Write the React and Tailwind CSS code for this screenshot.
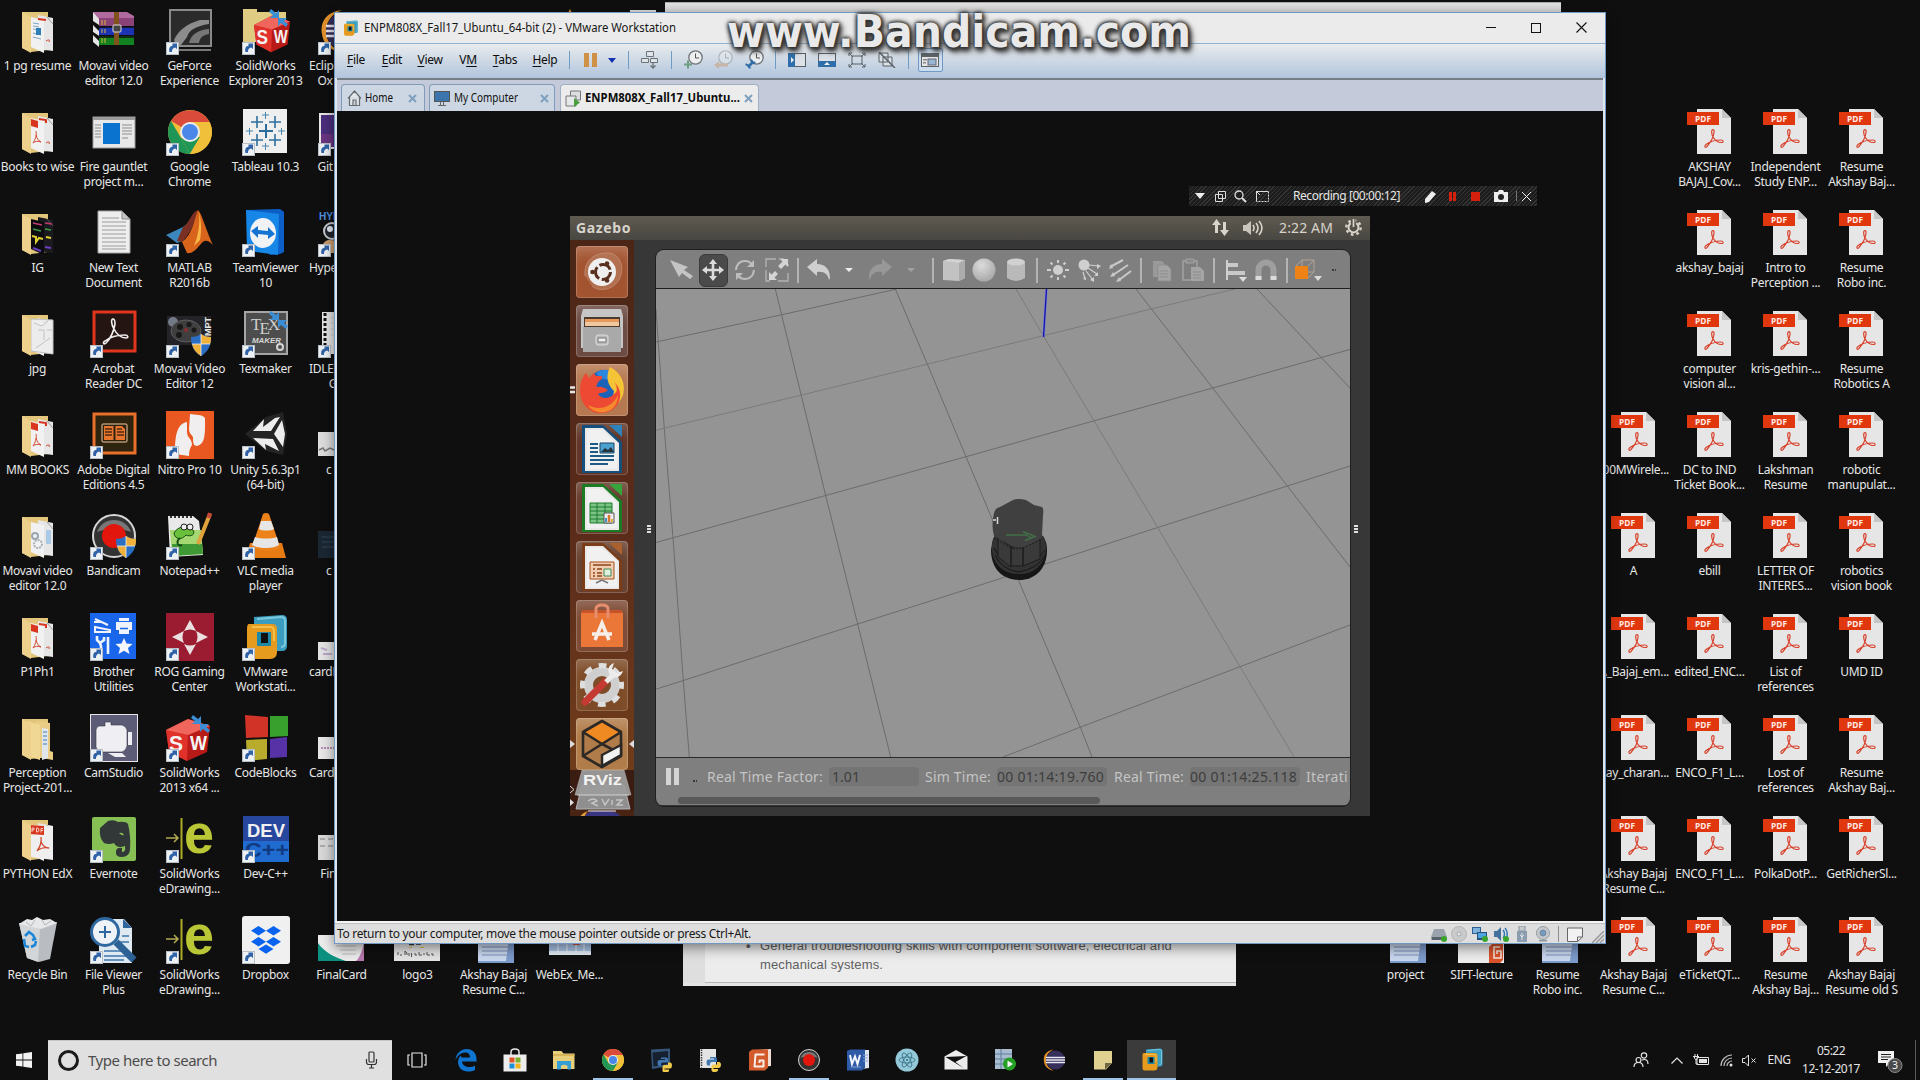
import React, { useLayoutEffect, useRef, useState } from "react";

/* Text set to a given width by adjusting its tracking (or its horizontal scale). */
function Fit({ w, children, className = "", stretch = false }) {
  const ref = useRef(null);
  const [style, setStyle] = useState({});
  useLayoutEffect(() => {
    const el = ref.current;
    const natural = el.getBoundingClientRect().width;
    if (stretch) {
      setStyle({ transform: `scaleX(${w / natural})`, width: w });
    } else {
      setStyle({ letterSpacing: `${(w - natural) / String(children).length}px` });
    }
  }, [w, children, stretch]);
  return (
    <span ref={ref} style={style} className={"inline-block shrink-0 origin-left self-center whitespace-pre " + className}>
      {children}
    </span>
  );
}

const S = ({ children, w = 48, h = 48, vb, className = "" }) => (
  <svg width={w} height={h} viewBox={vb || `0 0 ${w} ${h}`} className={"block shrink-0 " + className} fill="none">
    {children}
  </svg>
);

/* ---------- desktop icon drawings (48 x 48) ---------- */
const Arrow = () => (
  <g>
    <rect x="0.5" y="35.5" width="12" height="12" fill="#eef1f4" stroke="#b9bfc6" />
    <path d="M3.500 45c-1-4 .5-6 3-6.300V36.500h4.500v5.500L9.200 40.500C7 41 5.800 42.500 6 45z" fill="#2f62a6" />
  </g>
);

const Folder = ({ kind }) => (
  <S>
    <path d="M8 5h26v38l-17 2L8 41z" fill="#e3c57c" />
    {kind === "open" ? (
      <g>
        <path d="M22 7l14 2v28l3 1v8l-17-3z" fill="#e9cd86" />
        <path d="M28 14l6 1v29l-6 2z" fill="#dfe6ec" />
        <path d="M29 18h4M29 22h4M29 26h4M29 30h4" stroke="#3b78b5" />
        <path d="M13 7l13 4v35l-9-3z" fill="#f0d793" />
      </g>
    ) : (
      <g>
        <path d="M24 8l15 3v33l-15-2z" fill={kind === "dark" ? "#1b1b1f" : "#e6e6e6"} />
        <path d="M33 10l6 7" stroke={kind === "dark" ? "#555" : "#9a9a9a"} />
        <path d="M17 10l13 3v33l-13-6z" fill={kind === "dark" ? "#0c0c10" : "#f1f1f1"} />
        {kind === "pdf" && (
          <g>
            <path d="M17 11l7 2v7l-7-2z" fill="#d8361f" />
            <path d="M25 11l7 1v3" stroke="#d8361f" strokeWidth="2" />
            <path d="M22 23c1 4-1 9-3 12M22 27c1 4 3 6 5 7-3-1-6-1-8 1M32 35c3-2 4-1 3 1" stroke="#d0482f" />
          </g>
        )}
        {kind === "big" && (
          <g>
            <path d="M17 10l22 1v34l-22-3z" fill="#efefef" />
            <path d="M15 10l15 1v9l-15-1z" fill="#d8361f" />
            <path d="M18 13v4M18 13h2v2h-2M22.500 13v4h1.500l1-2-1-2zM27 17.500v-4h2M27 15.500h2" stroke="#f6ddd6" strokeWidth=".9" />
            <path d="M27 22c1 6-1 10-4 14M27 27c2 4 5 6 8 6-4-1-8 0-11 2" stroke="#d0482f" strokeWidth="1.300" />
          </g>
        )}
        {kind === "doc" && (
          <g>
            <path d="M19 16l6 1M19 19l6 1M19 22l6 1M19 26l8 2M19 30l8 2" stroke="#7da3c4" />
            <path d="M22 21h5v7h-5z" fill="#2e7fb8" />
            <path d="M24 12l8 1" stroke="#d8361f" strokeWidth="2" />
            <path d="M32 34c3-2 4-1 3 1" stroke="#d0482f" />
          </g>
        )}
        {kind === "gear" && (
          <g>
            <circle cx="21" cy="24" r="3" stroke="#9aa7b0" strokeWidth="2" />
            <circle cx="24" cy="32" r="4" stroke="#a7b1b8" strokeWidth="2" strokeDasharray="2 1" />
            <path d="M32 18h5v14h-5z" fill="#a9c9e6" />
          </g>
        )}
        {kind === "sketch" && <path d="M17 9l22 1v34l-22-3zM20 13l8 3 6-5M24 20h6v10M33 20h5M22 38l14-10" fill="#ececec" stroke="#c2c2c2" />}
        {kind === "dark" && (
          <g strokeWidth="1.500">
            <path d="M19 14l9 2M31 14l7 1" stroke="#c33a72" />
            <path d="M19 20l8 2M31 20l6 1" stroke="#3f9a46" />
            <path d="M18 27l4 1v5l3-4 4 1M32 28l5 1" stroke="#e0cf34" strokeWidth="2" />
            <path d="M19 39l8 3M31 38l6 1" stroke="#6c3fc0" strokeWidth="2" />
          </g>
        )}
      </g>
    )}
    <path d="M8 5l9 5v36l-9-5z" fill="#ecd08b" />
  </S>
);

const Pdf = () => (
  <S>
    <g transform="translate(0 -1)">
      <path d="M11 2h25l9 9v36H11z" fill="#e6e6e6" />
      <path d="M36 2l9 9h-9z" fill="#c6c6c6" />
      <rect x="1" y="5" width="32" height="13" fill="#e0370f" />
      <text x="17" y="15.200" textAnchor="middle" fontFamily="Noto Sans" fontWeight="700" fontSize="9.500" fill="#ffe9e2" textLength="16" lengthAdjust="spacingAndGlyphs">PDF</text>
      <path d="M27 22.500c-2 0-1.500 5 0 7.500 2 3.500 5 5.500 8.500 5.500 2.500 0 2-2.500-.5-2.500-5 0-11 1.500-15 4.500-2.500 2-.5 4 1 2 3.500-4 6.500-10 7-14 .2-2-.2-3-1-3z" stroke="#d8402a" strokeWidth="1.200" />
    </g>
  </S>
);

const Shield = ({ x = 26, y = 24 }) => (
  <g transform={`translate(${x} ${y})`}>
    <path d="M0 3c4 0 7-1 10-3 3 2 6 3 10 3 0 9-3 15-10 19C3 18 0 12 0 3z" fill="#2a6fc4" />
    <path d="M10 0c3 2 6 3 10 3 0 3 0 5-1 7h-9zM10 10v12C5 19 2 15 1 10z" fill="#f0b13b" />
    <path d="M10 0v22M1 10h18" stroke="#e8eef5" strokeWidth=".8" />
  </g>
);

const Chrome = () => (
  <g>
    <circle cx="24" cy="24" r="22" fill="#f1c03b" />
    <path d="M24 24L5 13A22 22 0 0 1 43.500 14H24z" fill="#da4b3b" />
    <path d="M5 13l10 17 9 16A22 22 0 0 1 5 13z" fill="#1f9556" />
    <path d="M15 30l9 16 10-17z" fill="#1f9556" />
    <path d="M24 46l10-17 3-15h6.500A22 22 0 0 1 24 46z" fill="#f1c03b" />
    <circle cx="24" cy="24" r="10" fill="#ececec" />
    <circle cx="24" cy="24" r="8" fill="#4b87e8" />
  </g>
);

const BandicamArt = () => (
  <g>
    <circle cx="24" cy="24" r="21" fill="#333" stroke="#d6d6d6" strokeWidth="2" />
    <path d="M7 20a18 18 0 0 1 34 0c-9-4-25-4-34 0z" fill="#777" />
    <circle cx="24" cy="24" r="12" fill="#e2160c" />
  </g>
);

const VmArt = () => (
  <g>
    <path d="M12 3l28-2q5 0 5 5v26q0 5-5 5H20q-8 0-8-8z" fill="#3b9dc0" />
    <path d="M15 5l24-2q4 0 4 4v22q0 4-4 4" stroke="#7cc8dd" strokeWidth="2" />
    <path d="M7 10h23q5 0 5 5v23q0 7-7 7H10q-5 0-5-5V15q0-5 2-5z" fill="#e69b1f" />
    <path d="M10 13h18q4 0 4 4v10" stroke="#f4c04d" strokeWidth="2" />
    <path d="M15 18h14v14H15z" fill="#1d88a8" />
    <path d="M19 19h7v10h-7z" fill="#101010" />
  </g>
);

const SwArt = () => (
  <g>
    <path d="M0 16L22 5l22 7-3 26-20 9L3 38z" fill="#b81a17" />
    <path d="M0 16l22 5-1 26L3 38z" fill="#e0312b" />
    <path d="M0 16L22 5l22 7-22 9z" fill="#f0665c" />
    <text x="3" y="37" fontFamily="Liberation Sans" fontWeight="700" fontSize="22" fill="#f4f4f4" textLength="14" lengthAdjust="spacingAndGlyphs">S</text>
    <text x="24" y="36" fontFamily="Liberation Sans" fontWeight="700" fontSize="20" fill="#f4f4f4" textLength="17" lengthAdjust="spacingAndGlyphs">W</text>
  </g>
);
const Compress = ({ x = 26, y = 2 }) => (
  <g transform={`translate(${x} ${y})`} fill="#3b8ed6">
    <path d="M2 0l5 4 3-3v8H1l3-3-4-3zM17 18l-5-4-3 3v-8h9l-3 3 4 3z" />
  </g>
);
const EDrawArt = () => (
  <g>
    <path d="M15.500 3v41" stroke="#a9ac24" strokeWidth="2" />
    <path d="M0 23h12M8 19l4 4-4 4" stroke="#b4ab52" strokeWidth="1.500" />
    <text x="18" y="38" fontFamily="Liberation Sans" fontWeight="700" fontSize="56" fill="#b9c635" textLength="30" lengthAdjust="spacingAndGlyphs">e</text>
  </g>
);
const EclipseArt = () => (
  <g>
    <path d="M24 3C8 5 2 15 4 27c1 9 8 17 19 18C12 40 8 32 8 24S13 7 24 3z" fill="#e2922d" />
    <circle cx="27" cy="24" r="19" fill="#352f5c" />
    <path d="M8 19h38M8 24h38M8 29h38" stroke="#e8e6f0" strokeWidth="2.600" />
  </g>
);
const Paper = ({ c = "#e6e6e6", children, h = 26, y = 12 }) => (
  <S>
    <rect x="0" y={y} width="46" height={h} fill={c} />
    {children}
  </S>
);
const WordDoc = () => (
  <S>
    <rect x="8" y="2" width="36" height="45" fill="#7c9acb" />
    <path d="M8 2h34l-6 43H8z" fill="#c9d7ee" />
    <path d="M12 12h26M12 17h26M12 22h26M12 27h26M12 31h26M12 35h26M12 39h26" stroke="#7d93b8" />
  </S>
);

const ART = {
  winrar: (
    <S>
      <path d="M3 5h34l7 4v9H9z" fill="#b06a9e" />
      <path d="M3 5l6 7v6l-6-4zM3 18l6 6v5l-6-4zM3 28l6 6v6l-6-5z" fill="#e4e4e4" />
      <path d="M9 11h35v8H9z" fill="#8a4277" />
      <path d="M9 20h35v8H9z" fill="#1c34b4" />
      <path d="M9 29h35v9H9z" fill="#128221" />
      <path d="M3 16l6 4h35M3 26l6 4h35" stroke="#111" strokeWidth="1.500" />
      <path d="M12 13v5M12 22v4M12 31v5M15 13v5M15 22v4M15 31v5" stroke="#d9b33a" />
      <path d="M24 5h5v33h-5z" fill="#80531c" />
      <rect x="23" y="18" width="8" height="7" rx="1" stroke="#dedede" fill="#444" />
    </S>
  ),
  geforce: (
    <S>
      <rect x="4" y="3" width="41" height="36" fill="#2b2b2b" stroke="#8a8a8a" strokeWidth="2" />
      <path d="M8 33c4-9 12-16 26-20h9v4C30 19 23 23 21 30l-6 8h-5z" fill="#8c8c8c" />
      <path d="M23 36c2-8 8-13 20-14v5c-7 1-9 4-10 9z" fill="#777" />
      <path d="M13 43h32" stroke="#777" strokeWidth="2" />
      <Arrow />
    </S>
  ),
  swfolder: (
    <S>
      <path d="M1 2h14v3h29v30H1z" fill="#e0cb83" />
      <g transform="translate(12 4) scale(.82 .88)"><SwArt /></g>
      <Compress x={27} y={2} />
      <Arrow />
    </S>
  ),
  eclipse: <S><EclipseArt /><Arrow /></S>,
  tile: (
    <S>
      <rect x="3" y="9" width="42" height="31" fill="#e8e8e8" stroke="#9b9b9b" />
      <path d="M3 9h42v3H3z" fill="#9c9c9c" />
      <rect x="13" y="15" width="17" height="21" fill="#0a72cf" />
      <path d="M5 17h6M5 20h6M5 23h6M5 26h6M5 29h6M32 17h10M32 20h10M32 23h10M32 26h10M32 30h6" stroke="#8d8d8d" />
    </S>
  ),
  chrome: <S><Chrome /><Arrow /></S>,
  tableau: (
    <S>
      <rect x="1" y="1" width="44" height="44" fill="#efefef" />
      <path d="M17 23h14M24 16v14" stroke="#2c6c9c" strokeWidth="2" />
      <path d="M9 14h12M15 8v12M27 14h12M33 8v12M9 32h12M15 26v12M27 32h12M33 26v12" stroke="#2f6f9e" strokeWidth="1.600" />
      <path d="M20 7h7M23.500 4v7M20 38h7M23.500 35v7M4 23h7M7.500 20v7M36 23h7M39.500 20v7" stroke="#4a86ac" />
      <Arrow />
    </S>
  ),
  github: <S><rect x="2" y="6" width="44" height="34" fill="#4a2e7c" stroke="#e5e5e5" strokeWidth="2" /><path d="M3 26h12v13H3z" fill="#6b3582" /><Arrow /></S>,
  text: (
    <S>
      <path d="M8 2h24l8 8v34H8z" fill="#ededed" stroke="#a5a5a5" />
      <path d="M32 2l8 8h-8z" fill="#c4c4c4" stroke="#8b8b8b" />
      <path d="M12 9h17M12 13h24M12 17h24M12 21h24M12 25h24M12 29h24M12 33h24M12 37h24M12 40h24" stroke="#9b9b9b" />
    </S>
  ),
  matlab: (
    <S>
      <path d="M0 26l17-8 8-6-8 20-6 2z" fill="#3b86bd" />
      <path d="M17 18c6-3 9-16 15-17-4 12-6 22-16 32l-5-1z" fill="#7a2f22" />
      <path d="M32 1c4 4 8 20 15 35-6-6-9-5-13 0-5 6-9 9-13 8l-5-11C27 25 28 10 32 1z" fill="#d8641c" />
      <path d="M33 3c1 10 0 22-5 34l6-6c2-10 1-20-1-28z" fill="#f6b545" />
      <Arrow />
    </S>
  ),
  teamviewer: (
    <S>
      <path d="M4 1l34-1 4 3v40l-4 2-10 1z" fill="#0c5fc7" />
      <path d="M4 1l33 4-1 41-29-4H5z" fill="#1687e6" />
      <ellipse cx="21" cy="24" rx="13" ry="15" fill="#f0f2f5" />
      <path d="M9 22l7-5v4l10 1v-4l7 7-7 5v-4l-10-1v4z" fill="#1574d2" />
      <Arrow />
    </S>
  ),
  hyper: (
    <S>
      <text x="1" y="11" fontFamily="Liberation Sans" fontWeight="700" fontSize="10" fill="#4e8ee0">HYPER</text>
      <circle cx="14" cy="22" r="8" fill="#20242c" stroke="#c6c9cf" strokeWidth="2" />
      <circle cx="12" cy="20" r="3" fill="#dfe6ef" />
      <path d="M4 38c2-8 8-8 14-6v12H4z" fill="#c99e70" />
      <Arrow />
    </S>
  ),
  acrobat: (
    <S>
      <rect x="4" y="2" width="41" height="39" fill="#251512" stroke="#e1361d" strokeWidth="3" />
      <path d="M23 9c-2 0-2 5 1 10 3 6 8 9 12 9 3 0 2-3-1-3-7 0-15 2-20 6-3 2-1 4 1 2 5-5 8-13 9-19 0-3-1-5-2-5z" stroke="#f0eeee" strokeWidth="1.600" />
      <Arrow />
    </S>
  ),
  mpt: (
    <S>
      <rect x="1" y="6" width="44" height="29" fill="#242428" />
      <circle cx="7" cy="12" r="5" fill="#a9b4c6" opacity=".6" />
      <ellipse cx="20" cy="21" rx="15" ry="11" fill="#3f3f3f" stroke="#5d5d5d" />
      <circle cx="14" cy="17" r="3" fill="#191919" /><circle cx="23" cy="14.500" r="2.600" fill="#191919" /><circle cx="28" cy="20" r="2.600" fill="#191919" /><circle cx="13" cy="25" r="3" fill="#191919" /><circle cx="20" cy="20" r="2" fill="#8a2c2c" />
      <text transform="translate(45 26) rotate(-90)" fontFamily="Liberation Sans" fontWeight="700" fontSize="9" fill="#e6e6e6">MPT</text>
      <Shield x={25} y={24} />
      <Arrow />
    </S>
  ),
  texmaker: (
    <S>
      <rect x="3" y="2" width="42" height="42" fill="#4d4d4d" stroke="#a5a5a5" strokeWidth="2" />
      <text x="9" y="20" fontFamily="Liberation Serif" fontSize="17" fill="#cfcfcf">T<tspan dx="-2" dy="4">E</tspan><tspan dx="-2" dy="-4">X</tspan></text>
      <text x="10" y="33" fontFamily="Liberation Sans" fontWeight="700" fontStyle="italic" fontSize="7.500" fill="#d8d8d8" textLength="29" lengthAdjust="spacingAndGlyphs">MAKER</text>
      <circle cx="38" cy="37" r="3" stroke="#d5d5d5" strokeWidth="2" />
      <Compress x={27} y={1} />
      <Arrow />
    </S>
  ),
  idle: (
    <S>
      <rect x="4" y="2" width="42" height="42" fill="#e4e4e4" />
      <path d="M7 3v40" stroke="#111" strokeWidth="3" strokeDasharray="3 2" />
      <path d="M12 8h20M12 13h20M12 19h20M12 25h20" stroke="#cfcfcf" />
      <Arrow />
    </S>
  ),
  digital: (
    <S>
      <rect x="4" y="3" width="41" height="39" fill="#2e230f" stroke="#e8702a" strokeWidth="3" />
      <rect x="12" y="13" width="25" height="18" rx="1" stroke="#f0cba6" />
      <path d="M14 15h9.500v14H14zM25.500 15H32l3 3v11h-9.500z" fill="#e8752e" />
      <path d="M15 18h7M15 21h7M15 24h7M27 18h5M27 21h7M27 24h7" stroke="#4a2a10" strokeWidth="1.300" />
      <Arrow />
    </S>
  ),
  nitro: (
    <S>
      <rect width="48" height="48" fill="#ea5822" />
      <path d="M9 43c0-16 1-30 12-32v10c0 6 5 6 5 13-2 3-3 6-3 11z" fill="#f0eeee" />
      <path d="M24 3c5 1 12 0 15 4 0 14 1 26-8 28-4 0-4-4-4-9-2-3-4-4-4-8z" fill="#f0eeee" />
      <Arrow />
    </S>
  ),
  unity: (
    <S>
      <path d="M3 23L24 6l17-5 4 22-4 21-17-4z" fill="#242424" />
      <path d="M11 20L22 8l-1 8 12-9 5-1-9 14zM11 27l20 1 6 12-14-7 1 6zM32 23l8-14 3 14-2 13z" fill="#ededed" />
      <Arrow />
    </S>
  ),
  bandicam: <S><BandicamArt /><Shield x={26} y={24} /><Arrow /></S>,
  npp: (
    <S>
      <path d="M2 4h25l6 5 4 34-33 2z" fill="#e9e9e9" />
      <path d="M4 18h31l2 24-31 2z" fill="#a5d873" />
      <path d="M6 32h30l1 10-31 2z" fill="#3f9a35" />
      <path d="M4 5h24" stroke="#333" strokeWidth="2" strokeDasharray="2 2" />
      <path d="M8 21c4-7 12-8 19-3 3 5-3 7-7 5-4 5-11 5-12-2z" fill="#6abf3b" stroke="#174d16" />
      <circle cx="18" cy="15" r="3" fill="#eee" stroke="#222" /><circle cx="24" cy="15" r="3" fill="#eee" stroke="#222" />
      <path d="M14 26c-4 3-3 9 2 7" stroke="#174d16" strokeWidth="2" />
      <path d="M44 2l-12 30" stroke="#e0a23a" strokeWidth="4" />
      <path d="M44 1l-1.500 5" stroke="#c4483a" strokeWidth="4" />
      <Arrow />
    </S>
  ),
  vlc: (
    <S>
      <path d="M8 31h32l4 15H4z" fill="#e67a13" />
      <path d="M21 2q3-2 6 0l11 33c-4 5-22 5-28 0z" fill="#ee821a" />
      <path d="M19 9h10l3 8c-3 2-12 2-15 0zM13 25c6 2 16 2 22 0l2 8c-5 4-20 4-27 0z" fill="#e6e6e6" />
      <Arrow />
    </S>
  ),
  brother: (
    <S>
      <rect width="46" height="46" fill="#1a66ea" />
      <path d="M5 14l15 3v2H5zM5 6l13 6M4 9h8" stroke="#eef3fb" strokeWidth="2" />
      <path d="M26 9h16v8H26zM29 5h10v3H29zM29 15h10v6H29z" fill="#eef3fb" />
      <path d="M30 15.500h8" stroke="#1a66ea" strokeWidth="1.500" />
      <path d="M7 23v4l3 3 4-3v-3M10 30l1 3v8M18 24v9M18 33v8" stroke="#eef3fb" strokeWidth="2.600" />
      <path d="M34 25l2.500 5.500 6 .5-4.500 4 1.500 6-5.500-3.200-5.500 3.200 1.500-6-4.500-4 6-.5z" fill="#f4f6fb" />
      <Arrow />
    </S>
  ),
  rog: (
    <S>
      <rect width="48" height="48" fill="#9b1c31" />
      <path d="M24 7l6 11q-6-3-12 0zM24 42l6-11q-6 3-12 0zM6 24l12-6q-3 6 0 12zM42 24l-12-6q3 6 0 12z" fill="#eadfe1" />
      <Arrow />
    </S>
  ),
  vmware: <S><g transform="translate(0 1)"><VmArt /></g><Arrow /></S>,
  camstudio: (
    <S>
      <rect x=".5" y=".5" width="47" height="47" fill="#5d5c76" stroke="#e5e5ea" />
      <path d="M9 12h6V8h6v3h11q4 1 5 5v16q-1 5-5 6H11q-4-1-5-5V16q0-3 3-4z" fill="#efeff3" stroke="#333344" strokeWidth=".6" />
      <path d="M38 18h4v13h-4zM18 39h14l4 4H25z" fill="#efeff3" />
      <Arrow />
    </S>
  ),
  sw: <S><SwArt /><Compress x={25} y={1} /><Arrow /></S>,
  codeblocks: (
    <S>
      <path d="M3 1l23 2v20L4 24z" fill="#d13327" />
      <path d="M28 2h18v20l-18 1z" fill="#38a02d" />
      <path d="M4 26l21-1v20l-20 2z" fill="#b9ab2b" />
      <path d="M28 25l17-2v20l-17 1z" fill="#5732a6" />
      <Arrow />
    </S>
  ),
  evernote: (
    <S>
      <rect x="2" y="2" width="44" height="44" rx="2" fill="#86bf54" />
      <path d="M10 13l8-7q6-2 10 1 8-1 10 2 3 12 2 26-1 7-8 7-7 0-6-6 1-4 6-3v4q4 0 3-6-8 3-11-3-5 2-10 0-5-5-4-15z" fill="#323838" />
      <path d="M29 18q4-1 5 2-2 1-5-2z" fill="#86bf54" />
      <Arrow />
    </S>
  ),
  edraw: <S className="overflow-visible"><EDrawArt /><Arrow /></S>,
  dev: (
    <S>
      <rect x="1" y="1" width="46" height="46" fill="#27479e" />
      <path d="M1 26h46v21H1z" fill="#1f6bd0" />
      <text x="5" y="22" fontFamily="Liberation Sans" fontWeight="700" fontSize="19" fill="#f0f0f0" textLength="38" lengthAdjust="spacingAndGlyphs">DEV</text>
      <text x="3" y="42" fontFamily="Liberation Sans" fontWeight="700" fontSize="20" fill="#123a80" textLength="44" lengthAdjust="spacingAndGlyphs">C++</text>
      <Arrow />
    </S>
  ),
  recycle: (
    <S>
      <path d="M5 7l38-1-7 37-11 3-12-4z" fill="#b9bdc1" />
      <path d="M5 7l21 5-2 34-11-4z" fill="#d3d6d9" />
      <path d="M5 8l8-5 5 1 5-3 6 3 7-1 7 4-16 6z" fill="#e6e7e8" />
      <path d="M12 6l5 4 4-6M28 4l3 5 6-4" stroke="#b4b7ba" />
      <path d="M11 20l4-4 4 3 2 4-3 1M10 23l1 7 4 1M17 31l4-2 1-4" stroke="#1e86d6" strokeWidth="2.600" />
    </S>
  ),
  viewer: (
    <S>
      <path d="M14 3h20l8 9v35H9V20z" fill="#dfe9f2" />
      <path d="M33 3l9 9h-9z" fill="#2e659b" />
      <path d="M14 35h22M14 40h24M14 44h20M32 20h7M30 26h9" stroke="#3c75ab" strokeWidth="1.500" />
      <path d="M26 26l18 18" stroke="#2c6296" strokeWidth="7" />
      <circle cx="15" cy="16" r="13.500" fill="#eef3f8" stroke="#2f689f" strokeWidth="3" />
      <path d="M9 16h12M15 10v12" stroke="#2f689f" strokeWidth="2" />
      <Arrow />
    </S>
  ),
  dropbox: (
    <S>
      <rect width="48" height="48" rx="3" fill="#f0f0f0" />
      <path d="M16.500 10l7.500 4.700-7.500 4.700L9 14.700zM31.500 10l7.500 4.700-7.500 4.700-7.500-4.700zM16.500 21l7.500 4.700-7.500 4.700L9 25.700zM31.500 21l7.500 4.700-7.500 4.700-7.500-4.700zM24 28.500l7.500 4.500-7.500 4.700-7.500-4.700z" fill="#0a63ee" />
      <Arrow />
    </S>
  ),
  pdf: <Pdf />,
  word: <WordDoc />,
  paperSig: <Paper c="#dcdcdc" y={21} h={24}><path d="M1 39l4-2 2 3 5-3 4 2 6-2 4 2 8-2 8 2" stroke="#777" strokeWidth="1.500" /></Paper>,
  paperDark: <Paper c="#1b2733" y={19} h={27}><path d="M4 25h12M4 30h12M4 35h12" stroke="#2f4658" /></Paper>,
  paperLight: <Paper c="#e2e2e2" y={29} h={18}><path d="M3 35l6 2M5 41h9" stroke="#b9a7c9" strokeWidth="2" /></Paper>,
  paperText: <Paper c="#e6e6e6" y={23} h={22}><path d="M3 34h40" stroke="#b58ab0" strokeWidth="2" strokeDasharray="2 1" /></Paper>,
  paperGrey: <Paper c="#d7d7d7" y={20} h={25}><path d="M2 24h5M10 24h5M2 31h5M10 31h5" stroke="#9c9c9c" strokeWidth="1.500" /></Paper>,
  finalcard: (
    <Paper c="#ececec" y={19} h={26}>
      <path d="M0 27c6 9 16 14 28 18H0z" fill="#0c9180" />
      <path d="M46 27c-2 8-4 14-8 18h8z" fill="#b879ae" />
      <path d="M18 30h20M22 34h16M24 38h14" stroke="#bfbfbf" />
    </Paper>
  ),
  logo3: (
    <Paper c="#e3e3e3" y={19} h={26}>
      <path d="M15 28.500h5M22 28h5" stroke="#333" strokeWidth="1.500" />
      <path d="M15 31.500h3M26 31.500h4" stroke="#d9c04a" />
      <path d="M4 39v-3M6 39h2M11 39v-4l2 2v2M15 37v3M17.500 37v4M21 37v2h2M25 36v3h3M30 37v2M33 36v3h3M38 37v2h2" stroke="#555" />
    </Paper>
  ),
  webex: <S><rect x="3" y="10" width="42" height="28" fill="#a9c4e6" /><path d="M3 35h42v4H3z" fill="#e3ebf5" /><path d="M12 18v18M21 18v18M30 18v18M38 18v18M3 27h42" stroke="#eef4fb" /><path d="M27 26h7v3h-7z" fill="#d4553b" /></S>,
  sift: (
    <Paper c="#ececec" y={4} h={43}>
      <path d="M31 31l3-3h11v16l-3 3H31z" fill="#d9532c" /><path d="M42 31h-6v11h7v-7h-4v3" stroke="#f6e2d8" strokeWidth="1.600" />
      <path d="M22 27h4" stroke="#333" />
    </Paper>
  ),
  star: <S><path d="M24 2l5 10H19z" fill="#e08a2a" /></S>,
  page: <S><path d="M8 3h26v40H8z" fill="#dcdcdc" /></S>,
};

/* col, row, art, lines, optional side of labels that run under the window */
const ICONS = [
  [0, 0, "f:doc", ["1 pg resume"]], [1, 0, "winrar", ["Movavi video", "editor 12.0"]], [2, 0, "geforce", ["GeForce", "Experience"]], [3, 0, "swfolder", ["SolidWorks", "Explorer 2013"]], [4, 0, "eclipse", ["Eclip", "   Ox"], "l"],
  [7, 0, "star", []], [8, 0, "page", []],
  [0, 1, "f:pdf", ["Books to wise"]], [1, 1, "tile", ["Fire gauntlet", "project m..."]], [2, 1, "chrome", ["Google", "Chrome"]], [3, 1, "tableau", ["Tableau 10.3"]], [4, 1, "github", ["   Git"], "l"],
  [0, 2, "f:dark", ["IG"]], [1, 2, "text", ["New Text", "Document"]], [2, 2, "matlab", ["MATLAB", "R2016b"]], [3, 2, "teamviewer", ["TeamViewer", "10"]], [4, 2, "hyper", ["Hype"], "l"],
  [0, 3, "f:sketch", ["jpg"]], [1, 3, "acrobat", ["Acrobat", "Reader DC"]], [2, 3, "mpt", ["Movavi Video", "Editor 12"]], [3, 3, "texmaker", ["Texmaker"]], [4, 3, "idle", ["IDLE (", "       G"], "l"],
  [0, 4, "f:pdf", ["MM BOOKS"]], [1, 4, "digital", ["Adobe Digital", "Editions 4.5"]], [2, 4, "nitro", ["Nitro Pro 10"]], [3, 4, "unity", ["Unity 5.6.3p1", "(64-bit)"]], [4, 4, "paperSig", ["      c"], "l"],
  [0, 5, "f:gear", ["Movavi video", "editor 12.0"]], [1, 5, "bandicam", ["Bandicam"]], [2, 5, "npp", ["Notepad++"]], [3, 5, "vlc", ["VLC media", "player"]], [4, 5, "paperDark", ["      c"], "l"],
  [0, 6, "f:pdf", ["P1Ph1"]], [1, 6, "brother", ["Brother", "Utilities"]], [2, 6, "rog", ["ROG Gaming", "Center"]], [3, 6, "vmware", ["VMware", "Workstati..."]], [4, 6, "paperLight", ["cardD"], "l"],
  [0, 7, "f:open", ["Perception", "Project-201..."]], [1, 7, "camstudio", ["CamStudio"]], [2, 7, "sw", ["SolidWorks", "2013 x64 ..."]], [3, 7, "codeblocks", ["CodeBlocks"]], [4, 7, "paperText", ["Card"], "l"],
  [0, 8, "f:big", ["PYTHON EdX"]], [1, 8, "evernote", ["Evernote"]], [2, 8, "edraw", ["SolidWorks", "eDrawing..."]], [3, 8, "dev", ["Dev-C++"]], [4, 8, "paperGrey", ["    Fin"], "l"],
  [0, 9, "recycle", ["Recycle Bin"]], [1, 9, "viewer", ["File Viewer", "Plus"]], [2, 9, "edraw", ["SolidWorks", "eDrawing..."]], [3, 9, "dropbox", ["Dropbox"]], [4, 9, "finalcard", ["FinalCard"]],
  [5, 9, "logo3", ["logo3"]], [6, 9, "word", ["Akshay Bajaj", "Resume C..."]], [7, 9, "webex", ["WebEx_Me..."]],
  [18, 9, "word", ["project"]], [19, 9, "sift", ["SIFT-lecture"]], [20, 9, "word", ["Resume", "Robo inc."]],
  [22, 1, "pdf", ["AKSHAY", "BAJAJ_Cov..."]], [23, 1, "pdf", ["Independent", "Study ENP..."]], [24, 1, "pdf", ["Resume", "Akshay Baj..."]],
  [22, 2, "pdf", ["akshay_bajaj"]], [23, 2, "pdf", ["Intro to", "Perception ..."]], [24, 2, "pdf", ["Resume", "Robo inc."]],
  [22, 3, "pdf", ["computer", "vision al..."]], [23, 3, "pdf", ["kris-gethin-..."]], [24, 3, "pdf", ["Resume", "Robotics A"]],
  [21, 4, "pdf", ["00MWirele..."], "r"], [22, 4, "pdf", ["DC to IND", "Ticket Book..."]], [23, 4, "pdf", ["Lakshman", "Resume"]], [24, 4, "pdf", ["robotic", "manupulat..."]],
  [21, 5, "pdf", ["A"]], [22, 5, "pdf", ["ebill"]], [23, 5, "pdf", ["LETTER OF", "INTERES..."]], [24, 5, "pdf", ["robotics", "vision book"]],
  [21, 6, "pdf", ["A_Bajaj_em..."], "r"], [22, 6, "pdf", ["edited_ENC..."]], [23, 6, "pdf", ["List of", "references"]], [24, 6, "pdf", ["UMD ID"]],
  [21, 7, "pdf", ["jay_charan..."], "r"], [22, 7, "pdf", ["ENCO_F1_L..."]], [23, 7, "pdf", ["Lost of", "references"]], [24, 7, "pdf", ["Resume", "Akshay Baj..."]],
  [21, 8, "pdf", ["Akshay Bajaj", "Resume C..."]], [22, 8, "pdf", ["ENCO_F1_L..."]], [23, 8, "pdf", ["PolkaDotP..."]], [24, 8, "pdf", ["GetRicherSl..."]],
  [21, 9, "pdf", ["Akshay Bajaj", "Resume C..."]], [22, 9, "pdf", ["eTicketQT..."]], [23, 9, "pdf", ["Resume", "Akshay Baj..."]], [24, 9, "pdf", ["Akshay Bajaj", "Resume old S"]],
];

function Desktop() {
  return (
    <div className="grid h-[1010px] w-[1900px] grid-cols-[repeat(25,76px)] grid-rows-[repeat(10,101px)]">
      {ICONS.map(([c, r, art, lines, side], i) => (
        <div key={i} style={{ gridColumn: c + 1, gridRow: r + 1 }} className="flex flex-col items-center pt-[7px]">
          {art.startsWith("f:") ? <Folder kind={art.slice(2)} /> : ART[art]}
          <div
            className={
              "mt-[3px] w-full whitespace-pre text-[12px] leading-[15px] tracking-[-0.29px] text-[#e6e6e6] " +
              (side === "l" ? "pl-[5px] text-left" : side === "r" ? "flex flex-col items-end pr-[3px]" : "flex flex-col items-center pr-[1px]")
            }
          >
            {lines.map((l, j) => <div key={j}>{l}</div>)}
          </div>
        </div>
      ))}
    </div>
  );
}

/* ---------- VMware window ---------- */
const Slot = ({ className = "", children }) => <div className={"flex h-full shrink-0 items-center justify-center " + className}>{children}</div>;
const VSep = () => <div className="h-[18px] w-px bg-[#6f9cc4]" />;

const Monitor = () => (
  <S w={16} h={16}><rect x=".5" y="1.500" width="15" height="10" fill="#3c74ae" stroke="#555" /><path d="M6.500 12v3M9.500 12v3M4 15.500h8" stroke="#666" /></S>
);

const SnapClock = ({ children, faded }) => (
  <S w={20} h={20} className={faded ? "opacity-35" : ""}>
    <circle cx="11.500" cy="7.500" r="6.700" fill="#eceef0" stroke="#6e7478" strokeWidth="1.300" />
    <path d="M11.500 3.500v4.500h3.500" stroke="#555" />
    {children}
  </S>
);

function MenuItem({ w, pre = "", u, post = "" }) {
  return (
    <Slot className={w}>
      <span className="text-[12px] leading-4 tracking-[-0.3px] text-[#0c0c0c]">
        {pre}<span className="underline underline-offset-2">{u}</span>{post}
      </span>
    </Slot>
  );
}

function VmToolbar() {
  return (
    <div className="flex h-[35px] shrink-0 items-center border-t border-[#8fb2cf] bg-gradient-to-b from-[#e9ecee] via-[#cdd8e4] to-[#b1c5de] pb-[2px] pl-[2px]">
      <MenuItem w="w-[38px]" u="F" post="ile" />
      <MenuItem w="w-[34px]" u="E" post="dit" />
      <MenuItem w="w-[42px]" u="V" post="iew" />
      <MenuItem w="w-[34px]" pre="V" u="M" />
      <MenuItem w="w-[40px]" u="T" post="abs" />
      <MenuItem w="w-[40px]" u="H" post="elp" />
      <Slot className="w-[9px]"><VSep /></Slot>
      <Slot className="w-[32px] gap-[3px]"><div className="h-[14px] w-[5px] bg-[#cf9145]" /><div className="h-[14px] w-[5px] bg-[#cf9145]" /></Slot>
      <Slot className="w-[11px]"><S w={8} h={5}><path d="M0 0h8L4 5z" fill="#1230b0" /></S></Slot>
      <Slot className="w-[23px]"><VSep /></Slot>
      <Slot className="w-[20px]">
        <S w={18} h={18}><path d="M5.500.5h7v5h-7zM.500 7.500h7v4h-7zM9.500 7.500h7v4h-7z" fill="#dfe4e9" stroke="#6c7378" /><path d="M12 12v5M9.500 14.500L12 17l2.500-2.500" stroke="#6c7378" strokeWidth="1.300" /></S>
      </Slot>
      <Slot className="w-[23px]"><VSep /></Slot>
      <Slot className="w-[22px]"><SnapClock><path d="M0 14.500h8M4 10.500v8" stroke="#6f9d7f" strokeWidth="2" /></SnapClock></Slot>
      <Slot className="w-[38px]"><SnapClock faded><path d="M0 15l5-4v2.500h9v3H5V19z" fill="#c9803c" /></SnapClock></Slot>
      <Slot className="w-[24px]"><SnapClock><path d="M3 17l5-5" stroke="#2f6ea8" strokeWidth="2.600" /><path d="M6 9.500q1 3 4.500 3.500M.500 14.500q3 0 4.500 4" stroke="#2f6ea8" strokeWidth="2" /></SnapClock></Slot>
      <Slot className="w-[17px]"><VSep /></Slot>
      <Slot className="w-[26px]"><S w={18} h={14}><rect x=".5" y=".5" width="17" height="13" fill="#dbe1e6" stroke="#586066" /><path d="M0 0h7v14H0z" fill="#2f6ea8" /><path d="M3 4l3 3-3 3z" fill="#eee" /></S></Slot>
      <Slot className="w-[34px]"><S w={18} h={14}><rect x=".5" y=".5" width="17" height="13" fill="#dbe1e6" stroke="#586066" /><path d="M0 8h18v6H0z" fill="#2f6ea8" /><path d="M6 12l3-3 3 3z" fill="#eee" /></S></Slot>
      <Slot className="w-[26px]"><S w={18} h={16}><rect x="4" y="4" width="10" height="8" stroke="#586066" /><path d="M1 1l4 4M17 1l-4 4M1 15l4-4M17 15l-4-4M1 4V1h3M14 1h3v3M1 12v3h3M14 15h3v-3" stroke="#586066" /></S></Slot>
      <Slot className="w-[34px]"><S w={18} h={16}><path d="M1 1h9v9H1zM5 5h9v9H5z" fill="#dbe1e6" stroke="#586066" /><path d="M1 0l16 16" stroke="#586066" strokeWidth="1.500" /></S></Slot>
      <Slot className="w-[9px]"><VSep /></Slot>
      <Slot className="w-[34px]">
        <div className="flex h-[24px] w-[25px] items-center justify-center rounded-[2px] border border-[#6f98c6] bg-[#cbdcee]">
          <S w={18} h={14}><rect x=".5" y=".5" width="17" height="13" fill="#e4e6e8" stroke="#5d6367" /><path d="M0 0h18v4H0z" fill="#5d6367" /><path d="M2 6h4v1.500H2zM2 9h3v1.500H2z" fill="#888" /><rect x="7" y="6" width="8" height="6" fill="#9ab6d2" stroke="#667" /></S>
        </div>
      </Slot>
    </div>
  );
}

const TabX = () => <S w={9} h={9}><path d="M1 1l7 7M8 1L1 8" stroke="#7fa1bf" strokeWidth="2" /></S>;

function VmTabs() {
  return (
    <div className="flex h-[33px] shrink-0 items-end border-t-2 border-[#757d86] bg-[#c5cadb] pl-[4px]">
      <div className="flex h-[27px] w-[84px] items-center rounded-t-[4px] border border-b-0 border-[#7f9dba] bg-[#ccd7e3] pl-[5px]">
        <S w={15} h={16}><path d="M1 8.500L7.500 1 14 8.500M2.500 7.500v8h10v-8M6 15v-5h3v5" fill="#e2e6ea" stroke="#666b70" strokeWidth="1.200" /></S>
        <Fit stretch w={28} className="ml-[3px] text-[12px] leading-4 text-[#111]">Home</Fit>
        <div className="ml-[15px]"><TabX /></div>
      </div>
      <div className="ml-[4px] flex h-[27px] w-[126px] items-center rounded-t-[4px] border border-b-0 border-[#7f9dba] bg-[#ccd7e3] pl-[4px]">
        <Monitor />
        <Fit stretch w={64} className="ml-[4px] text-[12px] leading-4 text-[#111]">My Computer</Fit>
        <div className="ml-[22px]"><TabX /></div>
      </div>
      <div className="ml-[5px] flex h-[27px] w-[199px] items-center rounded-t-[4px] border border-b-0 border-[#9fb0c2] bg-[#ececec] pl-[4px]">
        <S w={17} h={17}><path d="M5.500 1h10v9h-10z" fill="#dcdfe2" stroke="#777" /><path d="M1 6h10v10H1z" fill="#e6e8ea" stroke="#777" /><path d="M9 8l6 4.500L9 17z" fill="#4aa03c" /></S>
        <Fit stretch w={155} className="ml-[3px] text-[12px] font-bold leading-4 text-[#0c0c0c]">ENPM808X_Fall17_Ubuntu...</Fit>
        <div className="ml-[4px]"><TabX /></div>
      </div>
    </div>
  );
}

function VmStatus() {
  const dot = <circle cx="13" cy="13" r="3" fill="#3aa42c" />;
  return (
    <div className="flex h-[22px] shrink-0 items-center border-t-2 border-[#f3f3f3] bg-[#dedede] pl-[2px] pt-[2px] shadow-[inset_0_1px_0_#c2c2c2]">
      <Fit w={414} className="text-[12px] leading-4 text-[#181818]">To return to your computer, move the mouse pointer outside or press Ctrl+Alt.</Fit>
      <div className="ml-auto flex items-center">
        <Slot className="w-[21px]"><S w={16} h={16}><path d="M3 3h10l3 8v3H0v-3z" fill="#9aa3ab" /><path d="M1 11h14v3H1z" fill="#59626a" />{dot}</S></Slot>
        <Slot className="w-[20px]"><S w={16} h={16}><circle cx="8" cy="8" r="7.500" fill="#c9cacc" stroke="#b5b5b5" /><circle cx="8" cy="8" r="2" fill="#e6e6e6" stroke="#aaa" /></S></Slot>
        <Slot className="w-[21px]"><S w={16} h={16}><path d="M0 1h9v7H0z" fill="#2d5e8e" /><path d="M1 2h7v5H1z" fill="#7cb2dc" /><path d="M5 6h10v8H5z" fill="#23507d" /><path d="M6 7h8v5H6z" fill="#4fa3e0" />{dot}</S></Slot>
        <Slot className="w-[21px]"><S w={16} h={16}><path d="M1 5h3l4-4v14l-4-4H1z" fill="#44709c" /><path d="M10 4c2 2 2 6 0 8M12 2c3 3 3 9 0 12" stroke="#2f74b4" strokeWidth="1.500" />{dot}</S></Slot>
        <Slot className="w-[21px]"><S w={12} h={16}><path d="M3 0h6v5H3z" fill="#c5c9ce" stroke="#8a929a" /><path d="M1 5h10v11H1z" fill="#8b9bb0" /><path d="M6 7v7M4 9l2 2 2-2" stroke="#e2e6ea" /></S></Slot>
        <Slot className="w-[21px]"><S w={16} h={16}><circle cx="8" cy="7" r="6.500" fill="#c3c9cf" stroke="#959ca3" /><circle cx="8" cy="7" r="3" fill="#6f9cc4" stroke="#7c8790" /><path d="M4 14h8v1.500H4z" fill="#8f969d" /></S></Slot>
        <Slot className="w-[11px]"><div className="h-[16px] w-px bg-[#8d8d8d]" /></Slot>
        <Slot className="w-[21px]"><S w={16} h={15}><path d="M.500 1h15v9l-5 4.500H.500z" fill="#f2f2f2" stroke="#666" /><path d="M10.500 14.500V10h5" stroke="#666" /></S></Slot>
        <Slot className="ml-[6px] w-[14px] pt-[6px]"><S w={12} h={12}><path d="M0 12L12 0M4 12l8-8M8 12l4-4" stroke="#999" strokeWidth="1.500" /></S></Slot>
      </div>
    </div>
  );
}

/* ---------- Ubuntu guest ---------- */
const LibreDoc = ({ c, c2, children }) => (
  <S w={52} h={52}>
    <path d="M6 2h21l19 17v31H6z" fill={c} />
    <path d="M33 2h13v12z" fill={c2} />
    <path d="M9 5h18l16 15v28H9z" fill="#e9e9e9" />
    <path d="M11 7h15l15 14v25H11z" fill="#f1f1f1" />
    {children}
  </S>
);

const LAUNCHER = [
  { bg: "bg-[#a2532f]", art: (
    <S w={52} h={52}><path d="M9 30C7 12 22 6 34 7c12 3 14 16 10 25-6 13-22 14-28 8" fill="#b87a5c" stroke="#d2a68f" strokeWidth=".7" opacity=".75" /><circle cx="26" cy="26" r="14" fill="#efefef" /><circle cx="27" cy="26" r="7.500" stroke="#59301f" strokeWidth="3" strokeDasharray="13 2.700" /><g fill="#59301f"><circle cx="16.500" cy="26" r="2.300" /><circle cx="31" cy="17.500" r="2.300" /><circle cx="31" cy="34.500" r="2.300" /></g></S>) },
  { bg: "bg-[#6b4a42]", art: (
    <S w={52} h={52}><path d="M7 4h38l2 7v32H5V11z" fill="#c6c6c6" /><path d="M8 12h36v10H8z" fill="#4a3a30" /><path d="M9 14h34v3H9z" fill="#e59a5c" /><path d="M9 17h34v4H9z" fill="#f0c79e" /><path d="M7 22h38v25H7z" fill="#a9a9a9" /><rect x="20" y="30" width="12" height="10" rx="2" fill="#b9b9b9" stroke="#ddd" /><path d="M22 33h8v4h-8z" fill="#efefef" stroke="#777" /></S>) },
  { bg: "bg-[#b57850]", art: (
    <S w={52} h={52}>
      <circle cx="28" cy="22" r="16" fill="#1b63b8" />
      <path d="M20 9q8-6 15-1l-2 8-9-2z" fill="#2b86dd" />
      <path d="M34 3c12 6 16 18 13 28-5 14-22 20-33 15 14 1 23-7 24-19-6-6-9-14-4-24z" fill="#f5c436" />
      <path d="M4 27c0-7 2-14 6-18l3 5 5-5 2 3h6c1 3-2 4-4 6l-2 5c4-1 8 0 12 3-4 4-7 2-10 4 4 6 12 5 17-1 3-1 2-8-1-11 12 10 6 30-12 31C12 50 4 38 4 27z" fill="#ee4a33" />
      <path d="M12 41c10 6 24 3 30-10 0 12-9 19-20 17-4-1-8-3-10-7z" fill="#f58a2c" />
    </S>) },
  { bg: "bg-[#603325]", art: (
    <LibreDoc c="#174f7c" c2="#2d83b9"><path d="M14 21h8M14 25h8M14 29h8M14 33h24M14 37h24M14 41h18" stroke="#1d5a85" strokeWidth="2" /><path d="M24 20h14v10H24z" fill="#4aa0cf" stroke="#1b4664" /><path d="M25 29l4-4 3 2 3-3 3 5z" fill="#26343c" /></LibreDoc>) },
  { bg: "bg-[#653b2c]", art: (
    <LibreDoc c="#1b7a22" c2="#36a53c"><path d="M14 21h22v20H14z" fill="#7cc486" stroke="#1d7a2c" /><path d="M14 25h22M14 29h22M14 33h22M14 37h22M21 21v20M29 21v20" stroke="#1d7a2c" /><path d="M28 31h10v10H28z" fill="#eee" stroke="#555" /><path d="M33 33v7" stroke="#d8732a" strokeWidth="2.500" /><path d="M30 36v4" stroke="#3b8fc4" strokeWidth="2" /><path d="M36 37v3" stroke="#e0b23a" strokeWidth="2" /></LibreDoc>) },
  { bg: "bg-[#67402f]", art: (
    <LibreDoc c="#7a3d17" c2="#a9612f"><path d="M14 21h24v17H14z" fill="#f3cdb2" stroke="#a3501f" /><path d="M17 24h18M17 28h2M17 32h2M17 35h2M21 28h5M21 32h5M21 35h5" stroke="#8a4419" strokeWidth="1.500" /><path d="M28 28h7v7h-7z" fill="#dff0df" stroke="#3f8a56" /><path d="M20 42l6-3 6 3" stroke="#777" strokeWidth="1.500" /></LibreDoc>) },
  { bg: "bg-[#7c4a34]", art: (
    <S w={52} h={52}><path d="M5 13l2-3h38l2 3v34H5z" fill="#ea7637" /><path d="M5 13l2-3h38l2 3z" fill="#c7532a" /><path d="M20 18V9q0-4 6-4t6 4v9" stroke="#e58d6c" strokeWidth="3" /><path d="M19 40l7-17 7 17M16 34h20" stroke="#f6efe9" strokeWidth="3.500" /></S>) },
  { bg: "bg-[#7d4b27]", art: (
    <S w={52} h={52}><circle cx="26" cy="26" r="13.500" stroke="#cfcfcf" strokeWidth="9" /><circle cx="26" cy="26" r="19.500" stroke="#dedede" strokeWidth="5" strokeDasharray="7.800 7.515" strokeDashoffset="3.900" /><path d="M9 43l20-20" stroke="#c43a33" strokeWidth="7" strokeLinecap="round" /><path d="M30 23l7-7" stroke="#ececec" strokeWidth="5" /><path d="M38 4c-6 2-7 8-4 12s10 4 13-4l-6 2-5-4z" fill="#ececec" /></S>) },
  { bg: "bg-[#b07c49]", art: (
    <S w={52} h={52}><path d="M26 3l19 11-19 12L7 14z" fill="#ef8a22" /><path d="M26 3l19 11v24L26 49 7 38V14zM7 14l19 12 19-12M26 26L7 38M26 26l19 10" stroke="#2c2826" strokeWidth="2.600" strokeLinejoin="round" /><path d="M26 37l19-10v10L26 48z" fill="#f2f2f2" stroke="#2c2826" strokeWidth="2.500" /></S>) },
];

const RVIZ = (
  <S w={58} h={40}>
    <path d="M8 15h42l6 24H2z" fill="#8f8f8f" stroke="#b5b5b5" />
    <path d="M8 0h42l7 25H1z" fill="#9c9c9c" fillOpacity=".95" stroke="#bcbcbc" strokeWidth=".5" />
    <path d="M3 25h52" stroke="#c8c8c8" />
    <path d="M14 31q6-4 9 0l-5 2 6 3M28 29l3 6 4-6M38 30v5M42 30h6l-5 5h6" stroke="#c4c4c4" strokeWidth="1.500" />
    <text x="9" y="15" fontFamily="Liberation Sans" fontWeight="700" fontSize="15" fill="#f2f2f2" textLength="39" lengthAdjust="spacingAndGlyphs">RViz</text>
  </S>
);

function Launcher() {
  return (
    <div className="flex h-full w-[64px] shrink-0 flex-col overflow-hidden bg-gradient-to-b from-[#4b2617] via-[#5b2b1a] to-[#74401a] pt-[6px]">
      {LAUNCHER.map((t, i) => (
        <div key={i} className={(i === 8 ? "h-[52px]" : "mb-[7px] h-[52px]") + " flex w-full shrink-0 items-center"}>
          <div className="flex w-[6px] items-center">
            {i === 2 && <S w={5} h={8}><path d="M0 1.500h5M0 6h5" stroke="#e6e6e6" strokeWidth="2.500" /></S>}
            {i === 8 && <S w={5} h={8}><path d="M0 0l5 4-5 4z" fill="#ddd" /></S>}
          </div>
          <div className={"h-[52px] w-[52px] shrink-0 overflow-hidden rounded-[4px] shadow-[inset_0_0_0_1px_rgba(255,255,255,0.18),inset_0_12px_14px_-6px_rgba(255,255,255,0.22)] " + t.bg}>{t.art}</div>
          {i === 8 && <div className="ml-[1px]"><S w={5} h={8}><path d="M5 0L0 4l5 4z" fill="#ddd" /></S></div>}
        </div>
      ))}
      <div className="flex shrink-0 bg-[#3a1c12]">
        <div className="flex w-[4px] flex-col justify-end gap-[6px] pb-[4px]">
          <S w={4} h={7}><path d="M0 0l4 3.500L0 7" stroke="#ddd" /></S>
          <S w={4} h={7}><path d="M0 0l4 3.500L0 7z" fill="#ddd" /></S>
        </div>
        {RVIZ}
      </div>
      <div className="flex justify-center bg-[#4a2413]"><S w={52} h={10}><path d="M6 10Q10 2 18 1h18q8 2 11 9z" fill="#3a3580" /><path d="M2 10q3-7 10-9-4 4-4 9z" fill="#e2a03a" /><path d="M12 1h28" stroke="#eee" /></S></div>
    </div>
  );
}

const GSep = () => <div className="h-[25px] w-[1.5px] bg-[#b4b4b4]" />;
const Caret = ({ c = "#dcdcdc" }) => <S w={8} h={4}><path d="M0 0h8L4 4z" fill={c} /></S>;
const I = ({ children }) => <S w={24} h={24}>{children}</S>;

function GazeboToolbar() {
  return (
    <div className="flex h-[38px] shrink-0 items-center bg-[#7f7f7f] pl-[10px] pt-[2px]">
      <Slot className="w-[31px]"><I><path d="M0 2l18 7-4 3 9 6-3 3-8-6-3 4z" fill="#c4c4c4" /></I></Slot>
      <Slot className="w-[32px]">
        <div className="flex h-[33px] w-[29px] items-center justify-center rounded-[6px] border border-[#3b3b3b] bg-[#4a4a4a]">
          <I><path d="M12 1l4 5h-2.700v4.700H18V8l5 4-5 4v-2.700h-4.700V18H16l-4 5-4-5h2.700v-4.700H6V16l-5-4 5-4v2.700h4.700V6H8z" fill="#dcdcdc" /></I>
        </div>
      </Slot>
      <Slot className="w-[32px]"><I><path d="M3 12q1-9 9-9 5 0 7 4M21 12q-1 9-9 9-5 0-7-4" stroke="#bdbdbd" strokeWidth="2.200" /><path d="M21 2v7h-7zM3 22v-7h7z" fill="#bdbdbd" /></I></Slot>
      <Slot className="w-[31px]"><I><path d="M1 9V1h10M23 15v8H13M1 12v11h4M23 8V6M19 1h-5" stroke="#b4b4b4" strokeWidth="1.300" /><path d="M15 1h8v8l-2.500-2.500L16 11l-3-3 4.500-4.500zM4 22v-8l2.500 2.500L10 13l3 3-3.500 3.500L12 22z" fill="#d4d4d4" /></I></Slot>
      <Slot className="w-[12px]"><GSep /></Slot>
      <Slot className="w-[30px]"><I><path d="M0 9l10-8v5c8 0 13 5 13 14l-1 2c-1-6-5-9-12-8v4z" fill="#cfcfcf" /></I></Slot>
      <Slot className="w-[30px]"><Caret c="#ececec" /></Slot>
      <Slot className="w-[32px]"><I><path d="M24 9L14 1v5C6 6 1 11 1 20l1 2c1-6 5-9 12-8v4z" fill="#989898" /></I></Slot>
      <Slot className="w-[30px]"><Caret c="#a2a2a2" /></Slot>
      <Slot className="w-[14px]"><GSep /></Slot>
      <Slot className="w-[28px]"><I><path d="M1 3l6-2 16 1v18l-6 3-16-1z" fill="#c2c2c2" /><path d="M1 3l6-2 16 1-6 3z" fill="#d2d2d2" /><path d="M17 5l6-3v18l-6 3z" fill="#acacac" /></I></Slot>
      <Slot className="w-[32px]">
        <I><defs><radialGradient id="sph" cx=".4" cy=".3" r=".8"><stop stopColor="#dcdcdc" /><stop offset="1" stopColor="#a2a2a2" /></radialGradient></defs><circle cx="12" cy="12" r="11.500" fill="url(#sph)" /></I>
      </Slot>
      <Slot className="w-[31px]"><I><path d="M3 4v16q9 6 18 0V4z" fill="#b9b9b9" /><ellipse cx="12" cy="4" rx="9" ry="3.500" fill="#d0d0d0" /></I></Slot>
      <Slot className="w-[12px]"><GSep /></Slot>
      <Slot className="w-[30px]"><I><circle cx="12" cy="12" r="5" fill="#cfcfcf" /><path d="M12 2v3M12 19v3M1 12h4M19 12h4M4.500 4.500l2 2M19.500 4.500l-2 2M4.500 19.500l2-2M19.500 19.500l-2-2" stroke="#cfcfcf" strokeWidth="2" /></I></Slot>
      <Slot className="w-[31px]"><I><circle cx="7" cy="7" r="5.500" fill="#cfcfcf" /><path d="M12 7l10 1M11 10l9 6M9 13l7 9M6 14l2 7" stroke="#cfcfcf" strokeWidth="1.200" /><path d="M20 6l4 2-4 3zM21 14v4h-4zM17 19v5l-4-2zM9 19v3l-3-1z" fill="#cfcfcf" /></I></Slot>
      <Slot className="w-[31px]"><I><path d="M15 2L2 9M20 7L5 17M23 13l-12 9" stroke="#c9c9c9" strokeWidth="2" /><path d="M1 11l2-5 2 4zM2 19l3-5 2 4zM8 24l3-5 2 4z" fill="#c9c9c9" /></I></Slot>
      <Slot className="w-[12px]"><GSep /></Slot>
      <Slot className="w-[30px]"><I><path d="M3 3h9l3 4v12H3z" fill="#999" /><path d="M8 7h9l4 4v12H8z" fill="#a4a4a4" stroke="#8d8d8d" /><path d="M10 13h8M10 16h8M10 19h8" stroke="#8d8d8d" /></I></Slot>
      <Slot className="w-[31px]"><I><rect x="2" y="3" width="14" height="19" stroke="#a2a2a2" strokeWidth="1.500" /><path d="M5 1h8v4H5z" fill="#8b8b8b" stroke="#a2a2a2" /><path d="M10 9h9l4 4v10H10z" fill="#a4a4a4" /><path d="M12 14h8M12 17h8M12 20h8" stroke="#8d8d8d" /></I></Slot>
      <Slot className="w-[12px]"><GSep /></Slot>
      <Slot className="w-[31px]"><I><path d="M3 2v20" stroke="#cfcfcf" strokeWidth="2" /><path d="M4 5h10v4H4zM4 13h17v4H4z" fill="#c9c9c9" /><path d="M15 19h8l-4 5z" fill="#dcdcdc" /></I></Slot>
      <Slot className="w-[30px]"><I><path d="M4.500 21V12a7.500 7.500 0 0 1 15 0v9" stroke="#9f9f9f" strokeWidth="6" /><path d="M1.500 18h6v4h-6zM16.500 18h6v4h-6z" fill="#dcdcdc" /></I></Slot>
      <Slot className="w-[12px]"><GSep /></Slot>
      <Slot className="w-[29px]">
        <S w={28} h={24}><path d="M2 8l6-6h12v12l-6 6M8 2v12h12M14 8l6-6M2 20l6-6" stroke="#b3a394" /><path d="M1 8h13v13H1z" fill="#ef8215" /><path d="M20 18h8l-4 5z" fill="#dcdcdc" /></S>
      </Slot>
      <Slot className="w-[24px] gap-[1px]"><div className="h-[2px] w-[2px] bg-[#3a3a3a]" /><div className="h-[2px] w-[1px] bg-[#3a3a3a]" /></Slot>
    </div>
  );
}

function Viewport() {
  return (
    <svg width="694" height="468" viewBox="656 289 694 468" className="block bg-[#949494]" fill="none">
      <g stroke="#6c6c6c" strokeWidth="1">
        <path d="M656 309L664.300 428.700L673 538L683.300 680.500L689.300 757" />
        <path d="M775.300 289L825.700 495.500L857.700 624L890.700 757" />
        <path d="M895.300 289L927.300 364L966 456.700L992.700 520.400L1018.300 579.700L1080.300 727.200L1092 757" />
        <path d="M1136 289L1151.300 308.900L1212.700 388L1287.300 486L1350 567" />
        <path d="M1257 289L1321.300 357.500L1350 388" />
        <path d="M656 342L780.700 315L896.700 289" />
        <path d="M656 542.500L825.700 495.500L966 456.700L1094 420.800L1212.700 388L1321.300 357.500L1350 349.500" />
        <path d="M656 689.200L683.300 680.500L857.700 624L960 591.600L1157.700 527.500L1287.300 486L1350 466" />
        <path d="M1003 757L1080.300 727.200L1240 666.700L1350 625" />
      </g>
      <g stroke="#7b7b7b" strokeWidth="1">
        <path d="M656 430.200L801.700 395L927.300 364.200L1043.300 335.700L1151.300 308.900L1235 289" />
        <path d="M1016 289L1043.300 335.700L1094 420.800L1157.700 527.500L1240 666.700L1294 757" />
      </g>
      <path d="M1046.500 289L1043.500 337" stroke="#8080e0" strokeWidth="2.500" />
      <path d="M1046.500 289L1043.500 337" stroke="#1418a8" strokeWidth="1.400" />
      <g>
        <path d="M991 550q2-14 4-14h48q4 6 4 14c0 20-13 30-28 30s-28-10-28-30z" fill="#161616" />
        <path d="M992 545q1-8 4-10h46q4 4 4 15c-2 16-13 24-27 24s-26-8-27-24z" fill="#333" />
        <path d="M995 555q6 14 23 17 20-3 27-17M994 548q8 16 24 18 18-2 27-16" stroke="#141414" />
        <path d="M998 537l13 10v20l-13-10zM1011 547h12v19h-12zM1023 547l17-9v21l-17 7z" fill="#3a3a3a" stroke="#1d1d1d" />
        <path d="M994 513q1-5 6-6l13-7q5-2 13 0l8 5 8 2q2 2 1 8l-1 20v3l-14 8q-9 3-16 0l-18-10q-3-11 0-23z" fill="#404040" />
        <path d="M994 538l17 10q8 2 14-1l17-8" stroke="#1a1a1a" strokeDasharray="2 1.500" />
        <path d="M1006 535h21M1023 531.500l12 5-10 4M1025 534l6 4" stroke="#406f48" strokeWidth="1.500" />
        <path d="M993 520h3M997.500 517v7" stroke="#d8d8d8" strokeWidth="1.500" />
      </g>
    </svg>
  );
}

const Handle = () => (
  <div className="flex flex-col gap-[1px]"><i className="h-[2px] w-[4px] bg-[#dedede]" /><i className="h-[2px] w-[4px] bg-[#dedede]" /><i className="h-[2px] w-[4px] bg-[#dedede]" /></div>
);

function GazeboStatus() {
  const lab = "text-[14px] leading-5 text-[#c4c4c4]";
  const val = "flex h-[19px] shrink-0 items-center rounded-[4px] bg-[#757575]";
  return (
    <div className="flex h-[48px] flex-col overflow-hidden border-t border-[#2b2b2b] bg-[#7f7f7f]">
      <div className="flex h-[37px] w-[694px] shrink-0 items-center overflow-hidden pl-[10px]">
        <div className="flex gap-[3px]"><div className="h-[17px] w-[5px] bg-[#d4d4d4]" /><div className="h-[17px] w-[5px] bg-[#d4d4d4]" /></div>
        <div className="ml-[14px] mt-[8px] flex gap-px"><div className="h-[2px] w-[2px] bg-[#3a3a3a]" /><div className="h-[2px] w-[1px] bg-[#3a3a3a]" /></div>
        <Fit w={116} className={"ml-[10px] " + lab}>Real Time Factor:</Fit>
        <div className={"ml-[6px] w-[90px] pl-[3px] " + val}><Fit w={28} className="text-[14px] text-[#3d3d3d]">1.01</Fit></div>
        <Fit w={66} className={"ml-[6px] " + lab}>Sim Time:</Fit>
        <div className={"ml-[6px] w-[110px] " + val}><Fit w={107} className="text-[14px] text-[#3d3d3d]">00 01:14:19.760</Fit></div>
        <Fit w={70} className={"ml-[7px] " + lab}>Real Time:</Fit>
        <div className={"ml-[6px] w-[110px] " + val}><Fit w={107} className="text-[14px] text-[#3d3d3d]">00 01:14:25.118</Fit></div>
        <Fit w={42} className={"ml-[6px] " + lab}>Iterati</Fit>
      </div>
      <div className="ml-[22px] mt-[2px] h-[7px] w-[422px] rounded-full bg-[#595959]" />
    </div>
  );
}

function Guest() {
  return (
    <div className="flex h-[600px] w-[800px] flex-col overflow-hidden bg-[#373737]">
      <div className="flex h-[24px] shrink-0 items-center bg-gradient-to-b from-[#5f5a50] to-[#494742] pb-px pl-[6px] pr-[8px]">
        <Fit w={55} className="text-[14px] font-bold leading-5 text-[#d8d4cb]">Gazebo</Fit>
        <div className="ml-auto flex items-center">
          <S w={17} h={17}><path d="M0 6l4.500-6L9 6H6v8H3V6zM8 11l4.500 6 4.500-6h-3V3h-3v8z" fill="#d8d4cb" /></S>
          <S w={20} h={16} className="ml-[14px]"><path d="M0 5h3l5-4v14l-5-4H0z" fill="#c9c5bd" /><path d="M10 5q2 3 0 6M13 3q4 5 0 10M16 1q6 7 0 14" stroke="#d8d4cb" strokeWidth="1.600" /></S>
          <Fit w={54} className="ml-[16px] text-[14px] leading-5 text-[#d8d4cb]">2:22 AM</Fit>
          <S w={17} h={17} className="ml-[12px]">
            <circle cx="8.500" cy="8.500" r="7.200" stroke="#d8d4cb" strokeWidth="2.400" strokeDasharray="2.650 3" />
            <path d="M5.800 4.200a5 5 0 1 0 5.400 0" stroke="#d8d4cb" strokeWidth="2" />
            <path d="M8.500 0v8" stroke="#4f4c46" strokeWidth="4" />
            <path d="M8.500 0v8" stroke="#d8d4cb" strokeWidth="1.800" />
          </S>
        </div>
      </div>
      <div className="flex min-h-0 flex-1">
        <Launcher />
        <div className="flex w-[21px] shrink-0 items-center justify-center pl-[8px] pt-[2px]"><Handle /></div>
        <div className="mt-[9px] flex h-[558px] w-[696px] shrink-0 flex-col overflow-hidden rounded-[9px] border border-[#1f1f1f]">
          <GazeboToolbar />
          <div className="border-t border-[#1f1f1f]"><Viewport /></div>
          <GazeboStatus />
        </div>
        <div className="flex flex-1 items-center pl-[3px] pt-[2px]"><Handle /></div>
      </div>
    </div>
  );
}

function RecordBar() {
  return (
    <div className="flex h-[20px] w-[348px] items-center bg-[repeating-linear-gradient(135deg,#343434_0_1px,#1c1c1c_1px_3px)] text-[#eee]">
      <Slot className="w-[22px]"><S w={10} h={6}><path d="M0 0h10L5 6z" fill="#eee" /></S></Slot>
      <Slot className="w-[18px]"><S w={11} h={11}><path d="M3.500.5h7v7h-7zM.500 3.500h7v7h-7z" stroke="#ddd" /></S></Slot>
      <Slot className="w-[23px]"><S w={13} h={13}><circle cx="5" cy="5" r="4" stroke="#ddd" strokeWidth="1.300" /><path d="M8 8l4 4" stroke="#ddd" strokeWidth="2" /></S></Slot>
      <Slot className="w-[20px]"><S w={13} h={11}><rect x=".5" y=".5" width="12" height="10" stroke="#ddd" strokeDasharray="2 1" /><path d="M0 0l4 4M0 .5h12M.500 0v10" stroke="#ddd" /></S></Slot>
      <div className="ml-[21px] flex w-[107px]"><Fit w={107} className="text-[12px] leading-4 text-[#e6e6e6]">Recording [00:00:12]</Fit></div>
      <Slot className="ml-[19px] w-[22px]"><S w={13} h={13}><path d="M8 1l4 3-7 8-4 1 0-4z" fill="#eee" /></S></Slot>
      <Slot className="w-[23px] gap-[1px]"><div className="h-[9px] w-[3px] bg-[#d6200e]" /><div className="h-[9px] w-[3px] bg-[#d6200e]" /></Slot>
      <Slot className="w-[22px]"><div className="h-[9px] w-[9px] bg-[#d6200e]" /></Slot>
      <Slot className="w-[30px]"><S w={14} h={12}><path d="M0 2h4l1-2h4l1 2h4v10H0z" fill="#eee" /><circle cx="7" cy="7" r="3" fill="#222" /></S></Slot>
      <Slot className="w-px"><div className="h-[10px] w-px bg-[#777]" /></Slot>
      <Slot className="w-[18px]"><S w={9} h={9}><path d="M0 0l9 9M9 0L0 9" stroke="#eee" /></S></Slot>
    </div>
  );
}

function VmWindow() {
  return (
    <div className="absolute left-[334px] top-[12px] flex h-[932px] w-[1272px] flex-col border border-[#6f98c2] bg-[#dfe6ee] shadow-[0_4px_12px_rgba(0,0,0,0.45)]">
      <div className="flex h-[30px] shrink-0 items-center bg-[#ebebeb] pl-[8px]">
        <S w={16} h={17} vb="2 0 46 48"><VmArt /></S>
        <Fit stretch w={312} className="ml-[5px] pb-px text-[12px] leading-4 text-[#161616]">ENPM808X_Fall17_Ubuntu_64-bit (2) - VMware Workstation</Fit>
        <div className="ml-auto flex h-full items-center pb-px">
          <Slot className="w-[45px]"><div className="h-px w-[10px] bg-[#111]" /></Slot>
          <Slot className="w-[45px]"><div className="h-[10px] w-[10px] border border-[#111]" /></Slot>
          <Slot className="w-[47px]"><S w={11} h={11}><path d="M.500.500l10 10M10.500.500l-10 10" stroke="#111" strokeWidth="1.100" /></S></Slot>
        </div>
      </div>
      <VmToolbar />
      <div className="flex h-[843px] shrink-0 flex-col pl-[2px] pr-[2px]">
        <VmTabs />
        <div className="flex h-[810px] flex-col bg-[#0f0f0f]">
          <div className="flex justify-end pr-[66px] pt-[75px]"><RecordBar /></div>
          <div className="ml-[233px] mt-[10px]"><Guest /></div>
        </div>
      </div>
      <VmStatus />
    </div>
  );
}

/* ---------- taskbar ---------- */
const P = ({ children, vb = "0 0 48 48", s = 24 }) => <S w={s} h={s} vb={vb}>{children}</S>;
const PyLogo = () => (
  <g><path d="M22 18h10q4 0 4 4v6H26q-4 0-4 4v3h-4q-3-1-3-6 0-6 4-6h11v-2h-8z" fill="#3f78b0" /><path d="M36 28h5q3 1 3 6t-4 6H29v2h9v3q-1 3-7 3t-6-4v-7q0-4 4-4h7z" fill="#f2cb4c" /></g>
);
const TASKS = [
  { art: <P><path d="M3 24C4 10 14 2 25 2c13 0 20 9 20 20v5H16c1 8 8 11 14 11 5 0 9-1 12-3v9c-4 2-9 3-14 3C15 47 8 38 8 28c0-5 2-10 6-13 1 2-1 4 2 4h16c0-7-4-10-9-10C14 9 7 15 3 24z" fill="#0f74d0" /></P> },
  { art: <P><path d="M16 14V8q0-6 8-6t8 6v6" stroke="#e8e8e8" strokeWidth="3" /><path d="M1 13h46v34H1z" fill="#ededed" /><path d="M13 19h10v10H13z" fill="#e2552a" /><path d="M25 19h10v10H25z" fill="#7cb12c" /><path d="M13 31h10v10H13z" fill="#1e8fdb" /><path d="M25 31h10v10H25z" fill="#f0b51e" /></P> },
  { art: <P><path d="M2 6h17l4 5h22v31H2z" fill="#e8cf7c" /><path d="M2 12h43v4H2z" fill="#d7b558" /><path d="M10 26h28v17h-7v-7q-7-5-13 0v7h-8z" fill="#36a0d6" /></P> },
  { on: "w-[40px] bg-[#9fc2e8]", art: <P><Chrome /></P> },
  { art: <P><path d="M2 3l38-2v35L4 42z" fill="#35557a" /><path d="M5 9l31-3v26L7 37z" fill="#16202e" /><g transform="translate(0 1)"><PyLogo /></g></P> },
  { art: <P><path d="M2 2h32v38H2z" fill="#e4e4e4" /><path d="M5 3v36" stroke="#333" strokeWidth="3" strokeDasharray="3 2" /><PyLogo /></P> },
  { art: <P><path d="M12 4l34-2v34l-34 4z" fill="#f0dcd0" /><path d="M8 3h32v36l-6 6H2V8z" fill="#d35a2b" /><path d="M33 13H15l-2 24h18V25h-8v5" stroke="#fbeee6" strokeWidth="4" strokeLinejoin="round" /></P> },
  { on: "w-[40px] bg-[#9fc2e8]", art: <P><BandicamArt /></P> },
  { art: <P><path d="M14 4h32v36l-32 4z" fill="#dfe6f2" /><path d="M2 6q3-3 8-3h28v36l-6 6H2z" fill="#2e5ba8" /><path d="M8 14l4 18 6-15 5 15 5-18" stroke="#f2f5fb" strokeWidth="4" /><path d="M34 14h10M34 20h10M34 26h10M10 38h20" stroke="#8aa5d4" strokeWidth="2" /></P> },
  { art: <P><circle cx="24" cy="24" r="23" fill="#93c9d8" /><g stroke="#336b80" strokeWidth="1.500"><ellipse cx="24" cy="24" rx="16" ry="6" /><ellipse cx="24" cy="24" rx="16" ry="6" transform="rotate(60 24 24)" /><ellipse cx="24" cy="24" rx="16" ry="6" transform="rotate(120 24 24)" /></g><circle cx="24" cy="24" r="2" fill="#336b80" /></P> },
  { art: <P><path d="M1 17L24 4l23 13v26H1z" fill="#ededed" /><path d="M3 18l42-2-22 12 16 12z" fill="#101010" /></P> },
  { art: <P><path d="M4 2h34v40H4z" fill="#a9bcd0" /><path d="M4 12h34M4 22h34M4 32h34M16 2v40" stroke="#5f7f9f" strokeWidth="2" /><circle cx="33" cy="32" r="13" fill="#24a022" /><path d="M29 25l11 7-11 7z" fill="#f2f2f2" /></P> },
  { art: <P><EclipseArt /></P> },
  { on: "w-[40px] bg-[#9fc2e8]", art: <P><path d="M6 6h36v24L30 43H6z" fill="#e0d190" /><path d="M42 30H28v13z" fill="#6f6740" /></P> },
  { on: "w-full bg-[#9fc2e8]", active: true, art: <P><VmArt /></P> },
];

function Taskbar() {
  return (
    <div className="absolute inset-x-0 bottom-0 flex h-[40px] items-stretch bg-[#0f0f0f]">
      <Slot className="w-[48px]"><S w={16} h={16}><path d="M0 2.300l6.500-.9v6.200H0zM7.300 1.300L16 0v7.600H7.300zM0 8.400h6.500v6.200L0 13.700zM7.300 8.400H16V16l-8.700-1.300z" fill="#f2f2f2" /></S></Slot>
      <div className="flex w-[344px] items-center border-t border-[#c4c4c4] bg-[#e0e0e0] pb-px pl-[10px] pr-[14px]">
        <div className="h-[21px] w-[21px] rounded-full border-[3px] border-[#1b1b1b]" />
        <Fit w={129} className="ml-[9px] text-[15px] leading-5 text-[#4c4c4c]">Type here to search</Fit>
        <S w={13} h={18} className="ml-auto"><rect x="4" y="1" width="5" height="10" rx="1" stroke="#333" strokeWidth="1.200" /><path d="M1.500 8v3q0 2.500 2.500 2.500h5q2.500 0 2.500-2.500V8M6.500 13.500V17M4 17h5" stroke="#333" strokeWidth="1.200" /></S>
      </div>
      <Slot className="w-[49px]"><S w={20} h={16}><path d="M5 1h10v14H5zM3 3H1v10h2M17 3h2v10h-2" stroke="#e8e8e8" strokeWidth="1.200" /></S></Slot>
      {TASKS.map((t, i) => (
        <div key={i} className={"flex w-[49px] flex-col items-center " + (t.active ? "bg-[#3b3b3b]" : "")}>
          <div className="flex h-[38px] items-center pt-[2px]">{t.art}</div>
          <div className={"h-[2px] " + (t.on || "")} />
        </div>
      ))}
      <div className="ml-auto flex items-center">
        <Slot className="w-[36px]"><S w={16} h={16}><circle cx="11" cy="3.500" r="2.700" stroke="#e4e4e4" strokeWidth="1.200" /><circle cx="5.500" cy="8" r="2.500" stroke="#e4e4e4" strokeWidth="1.200" /><path d="M1 15q0-4.500 4.500-4.500T10 15M9 8q6-2 6 4" stroke="#e4e4e4" strokeWidth="1.200" /></S></Slot>
        <Slot className="w-[36px]"><S w={12} h={7}><path d="M.500 6.500l5.500-5.500 5.500 5.500" stroke="#e4e4e4" strokeWidth="1.200" /></S></Slot>
        <Slot className="w-[13px]"><S w={17} h={14}><path d="M4 4.500h11.500v7H4z" stroke="#e4e4e4" /><path d="M6 6h8v4H6z" fill="#e4e4e4" /><path d="M0 3.500h6M1.500 3.500v2q1.500 2 3 0v-2M2 1v2M4.500 1v2M3 6v5h2" stroke="#e4e4e4" /></S></Slot>
        <Slot className="w-[37px]"><S w={13} h={13}><path d="M1 12A11 11 0 0 1 12 1M4 12a8 8 0 0 1 8-8M7 12a5 5 0 0 1 5-5" stroke="#bbb" strokeWidth="1.200" /><circle cx="11" cy="11" r="1.500" fill="#e4e4e4" /></S></Slot>
        <Slot className="w-[8px]"><S w={15} h={13}><path d="M.500 4.500h2.500l3.500-3.500v11l-3.500-3.500H.500zM9.500 4.500l4 4M13.500 4.500l-4 4" stroke="#e4e4e4" /></S></Slot>
        <Slot className="ml-[13px] w-[26px]"><Fit w={23} className="text-[12px] leading-4 text-[#e4e4e4]">ENG</Fit></Slot>
        <div className="ml-[6px] flex w-[66px] flex-col items-center text-[12px] leading-[18px] text-[#e4e4e4]">
          <Fit w={28}>05:22</Fit>
          <Fit w={58}>12-12-2017</Fit>
        </div>
        <Slot className="ml-[9px] w-[34px]">
          <S w={26} h={26}><path d="M1 4h16v12h-4l-4 4v-4H1z" fill="#f0f0f0" /><path d="M4 7.500h10M4 10h10M4 12.500h7" stroke="#222" /><circle cx="18" cy="18.500" r="7" fill="#4a4a4a" stroke="#8b8b8b" /><text x="18" y="22.300" textAnchor="middle" fontFamily="Noto Sans" fontSize="10.500" fill="#f0f0f0">3</text></S>
        </Slot>
        <div className="ml-[8px] h-[40px] w-px bg-[#5a5a5a]" />
        <div className="w-[4px]" />
      </div>
    </div>
  );
}

export default function App() {
  return (
    <div className="relative h-[1080px] w-[1920px] overflow-hidden bg-[#0f0f0f] font-['Noto_Sans','Open_Sans',sans-serif]">
      <Desktop />
      <div className="absolute left-[665px] top-[2px] h-[40px] w-[896px] border-t border-[#aaa] bg-gradient-to-b from-[#e2e2e2] to-[#a8a8a8]" />
      <div className="absolute left-[683px] top-[900px] flex h-[86px] w-[553px] border-b-[3px] border-[#e4e4e4] bg-[#ececec] shadow-[inset_0_-1px_0_#b5b5b5]">
        <div className="w-[22px] bg-[#dedede]" />
        <div className="ml-[55px] flex flex-1 flex-col items-start pt-[36px] font-['Liberation_Sans',sans-serif] text-[13px] leading-[19px] text-[#5f5f5f]">
          <div className="relative flex"><span className="absolute -left-[14px] font-bold">•</span><Fit w={412}>General troubleshooting skills with component software, electrical and</Fit></div>
          <div className="flex"><Fit w={123}>mechanical systems.</Fit></div>
        </div>
      </div>
      <VmWindow />
      <div className="absolute left-[727px] top-[3px]">
        <Fit stretch w={464} className="font-['DejaVu_Sans',sans-serif] text-[44px] font-bold leading-[58px] text-[#e9e9e9] [text-shadow:0_0_3px_#2a2a2a,0_0_5px_#333,0_0_6px_#444,2px_3px_6px_#333,3px_4px_8px_#444]">www.Bandicam.com</Fit>
      </div>
      <Taskbar />
    </div>
  );
}
